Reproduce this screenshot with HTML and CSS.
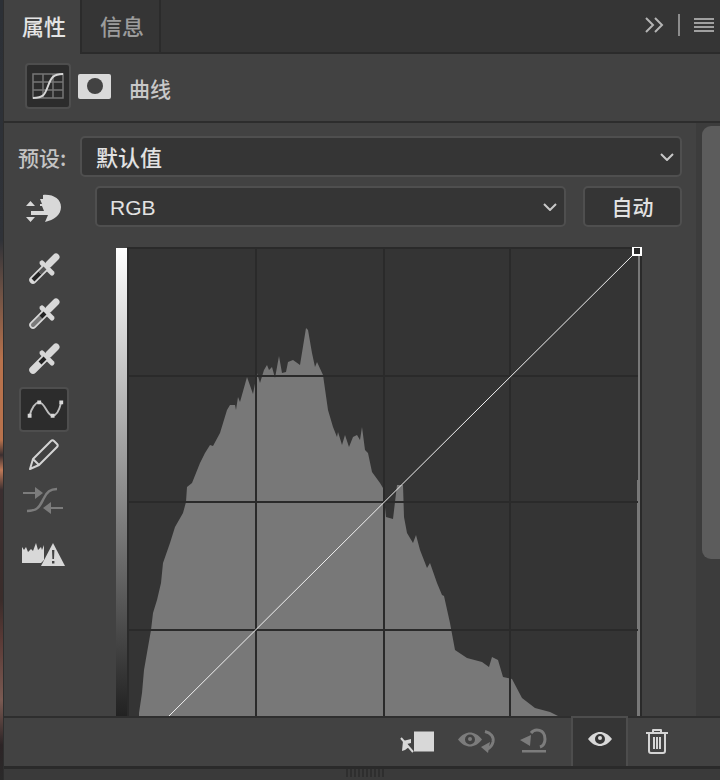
FILE: index.html
```html
<!DOCTYPE html>
<html lang="zh-CN">
<head>
  <meta charset="UTF-8">
  <title>属性 - 曲线</title>
  <link rel="stylesheet" href="styles.css">
</head>
<body>
  <div class="desktop-edge"></div>
  <div class="panel">
    <div class="tabs">
      <div class="tab tab-active">属性</div>
      <div class="tab">信息</div>
      <div class="tab-menu">
        <svg class="collapse" viewBox="0 0 20 16"><path d="M2 1l7 7-7 7M11 1l7 7-7 7"/></svg>
        <span class="tab-sep"></span>
        <span class="burger"><i></i><i></i><i></i><i></i></span>
      </div>
    </div>

    <div class="head">
      <div class="head-btn">
        <svg viewBox="0 0 32 26" width="32" height="26">
          <path class="grid-lines" d="M1 1h30v24H1zM1 9h30M1 17h30M11 1v24M21 1v24"/>
          <path class="s-curve" d="M1 25c11 0 12-4 15-12s5-12 15-12"/>
        </svg>
      </div>
      <div class="mask-icon"><span></span></div>
      <div class="head-title">曲线</div>
    </div>

    <div class="body">
      <div class="main">
        <div class="row preset-row">
          <label>预设:</label>
          <div class="select select-preset">
            <span>默认值</span>
            <svg class="chevron" viewBox="0 0 14 8"><path d="M1 1l6 6 6-6"/></svg>
          </div>
        </div>
        <div class="row channel-row">
          <svg class="hand" viewBox="0 0 36 32" width="36" height="32">
            <path class="light" d="M0 15l4.500-5 4.500 5zM0 26h9l-4.500 5z"/>
            <path class="light" d="M17 4C27 3 35 8 35 16c0 8-7 13-16 15l3-7H5v-4h13l-2-5h-2v-2h2l-2-5h3z"/>
          </svg>
          <div class="select select-channel">
            <span>RGB</span>
            <svg class="chevron" viewBox="0 0 14 8"><path d="M1 1l6 6 6-6"/></svg>
          </div>
          <div class="auto-btn">自动</div>
        </div>

        <div class="work">
          <div class="tools">
            <div class="tool">
              <svg viewBox="0 0 36 36" width="36" height="36">
                <path class="dropper-cap" d="M23 13l7-7"/>
                <path class="dropper-collar" d="M16 12l10 10"/>
                <path class="dropper-tube" d="M7 29l12-12"/>
                <path class="dropper-fill fill-black" d="M7 29l7-7"/>
                <path class="dropper-fill fill-dark" d="M14 22l5-5"/>
              </svg>
            </div>
            <div class="tool">
              <svg viewBox="0 0 36 36" width="36" height="36">
                <path class="dropper-cap" d="M23 13l7-7"/>
                <path class="dropper-collar" d="M16 12l10 10"/>
                <path class="dropper-tube" d="M7 29l12-12"/>
                <path class="dropper-fill fill-gray" d="M7 29l8-8"/>
                <path class="dropper-fill fill-black" d="M15 21l4-4"/>
              </svg>
            </div>
            <div class="tool">
              <svg viewBox="0 0 36 36" width="36" height="36">
                <path class="dropper-cap" d="M23 13l7-7"/>
                <path class="dropper-collar" d="M16 12l10 10"/>
                <path class="dropper-tube" d="M7 29l12-12"/>
                <path class="dropper-fill fill-black" d="M14 22l5-5"/>
              </svg>
            </div>
            <div class="tool tool-active">
              <svg viewBox="0 0 48 44" width="48" height="44">
                <path class="curve-line" d="M9 28c2-8 6-14 10-14 6 0 8 14 14 14 4 0 7-6 9-14"/>
                <path class="light" d="M7 26h4v4H7zM17 12h4v4h-4zM31 26h4v4h-4zM40 12h4v4h-4z"/>
              </svg>
            </div>
            <div class="tool">
              <svg viewBox="0 0 36 36" width="36" height="36">
                <path class="outline" d="M4 32l3-10L25 4c1-1 2-1 3 0l3 3c1 1 1 2 0 3L13 28zM7 22l6 6"/>
              </svg>
            </div>
            <div class="tool">
              <svg viewBox="0 0 44 32" width="44" height="32">
                <path class="smooth-line" d="M5 27c12 0 13-6 17-13 3-6 6-9 13-9"/>
                <path class="smooth-fill" d="M1 8h12V3l8 6-8 6v-5H1zM41 25H29v5l-8-6 8-6v5h12z"/>
              </svg>
            </div>
            <div class="tool tool-warn">
              <svg viewBox="0 0 44 26" width="44" height="26">
                <path class="light" d="M0 5l2 3 2-3 2 5 3-3 2 2 3-8 2 7 3-3 1 3 2-5v15l-3 3H0z"/>
                <path class="light" d="M31 1l12 23H19z"/>
                <path class="warn-mark" d="M30 8h2.400l-.4 9h-1.600zM30 19h2.400v2.400H30z"/>
              </svg>
            </div>
          </div>

          <div class="ramp"></div>

          <svg class="graph" viewBox="127 247 515 469" width="515" height="469">
            <rect class="graph-bg" x="127" y="247" width="515" height="469"/>
            <path class="hist" d="M139 716L139 713L142 693L144 670L148 647L151 630L153 613L157 600L161 583L163 563L170 543L175 527L183 513L186 502L187 487L192 483L200 463L205 453L210 445L213 446L220 433L227 410L230 405L235 405L236 410L238 397L240 402L247 377L253 394L257 373L260 383L264 370L267 365L269 370L272 367L275 378L279 356L282 373L286 372L288 362L293 360L300 365L306 328L308 330L312 353L315 367L317 362L323 375L328 410L333 427L337 437L338 432L342 445L345 435L349 447L353 437L357 435L360 440L362 427L365 450L368 453L372 472L380 483L383 488L386 517L393 519L397 485L403 485L404 517L407 533L413 543L416 535L420 550L427 568L430 563L437 583L442 595L444 596L450 623L455 650L467 658L482 662L489 667L492 657L498 660L503 677L512 679L522 698L535 708L550 712L558 716Z"/>
            <path class="hist" d="M638 247h2v469h-3V480h1z"/>
            <path class="grid" d="M127 376H638M127 502H638M127 630H638M256 247V716M384 247V716M510 247V716M127 248H642M128 247V716M641 247V716"/>
            <path class="diag" d="M169 716L637 251"/>
            <rect class="handle" x="633" y="247" width="8" height="8"/>
          </svg>
        </div>
      </div>

      <div class="scrollbar"><div class="thumb"></div></div>
    </div>

    <div class="footer">
      <svg class="foot-icon" viewBox="0 0 38 26" width="38" height="26">
        <path class="light" d="M18 3.500h20v20H18z"/>
        <path class="clip-line" d="M5 10l12 14"/>
        <path class="light" d="M6 23l1-10 8-2v4l-4 1 2 3-4 3z"/>
      </svg>
      <svg class="foot-icon" viewBox="0 0 38 26" width="38" height="26">
        <path class="eye" fill-rule="evenodd" d="M0 11.500C4 6.500 8 4.500 12 4.500s8 2 12 7c-4 5-8 7-12 7s-8-2-12-7zm12-5a5 5 0 100 10 5 5 0 000-10z"/>
        <circle class="eye" cx="12" cy="11" r="2"/>
        <path class="dim-line" d="M27 3.500c6 1.500 9 5.500 8 10.500-1 4-3 6-6 7"/>
        <path class="eye" d="M23 19l9-5-2 11z"/>
      </svg>
      <svg class="foot-icon" viewBox="0 0 28 28" width="28" height="28">
        <path class="dim-line" d="M11 6c4-5 14-4 14 6 0 4-2 7-5 8"/>
        <path class="eye" d="M0 13l11-5-1 11zM2 23h24v2.400H2z"/>
      </svg>
      <div class="foot-active">
        <svg viewBox="0 0 26 18" width="26" height="18">
          <path class="light" fill-rule="evenodd" d="M1 9C5 4 9 2 13 2s8 2 12 7c-4 5-8 7-12 7S5 14 1 9zm12-5a5 5 0 100 10 5 5 0 000-10z"/>
          <circle class="light" cx="13" cy="8" r="2"/>
        </svg>
      </div>
      <svg class="foot-trash" viewBox="0 0 24 26" width="24" height="26">
        <path class="outline" d="M1 5h22M8 5V2h8v3M4 5v18c0 1 1 2 2 2h12c1 0 2-1 2-2V5M9 9v12M12 9v12M15 9v12"/>
      </svg>
    </div>

    <div class="grip-bar">
      <div class="grip"></div>
    </div>
  </div>
</body>
</html>
```

FILE: styles.css
```css
* { box-sizing: border-box; }

body {
  margin: 0;
  width: 720px;
  height: 780px;
  overflow: hidden;
  display: flex;
  background: #424242;
  font-family: "Noto Sans CJK SC", "Liberation Sans", sans-serif;
  font-weight: 500;
}

.desktop-edge {
  width: 4px;
  flex: none;
  border-right: 1px solid #2e2e2e;
  background: linear-gradient(#2c3036 0, #2f3238 240px, #6b5044 290px, #b8724c 360px, #b8724c 440px, #3a2e30 455px, #c07a58 470px, #3a2e30 490px, #3a2c2a 600px, #5a3a36 640px, #7a5a52 700px, #2c2426 745px, #2a2a2a 780px);
}

.panel {
  flex: 1;
  display: flex;
  flex-direction: column;
  height: 780px;
}

/* tabs */
.tabs {
  height: 54px;
  display: flex;
  background: #353535;
  border-bottom: 2px solid #2b2b2b;
  flex: none;
}

.tab {
  width: 79px;
  font-size: 22px;
  line-height: 50px;
  padding-left: 18px;
  color: #9c9c9c;
  border-right: 2px solid #2b2b2b;
}

.tab-active {
  width: 78px;
  height: 54px;
  color: #e4e4e4;
  background: #424242;
  border-right: 2px solid #2b2b2b;
}

.tab-menu {
  margin-left: auto;
  display: flex;
  align-items: center;
  padding: 0 6px 2px 0;
}

.collapse {
  width: 20px;
  height: 16px;
  fill: none;
  stroke: #b4b4b4;
  stroke-width: 2;
}

.tab-sep {
  width: 2px;
  height: 22px;
  margin: 0 14px;
  background: #8c8c8c;
}

.burger {
  width: 20px;
  display: flex;
  flex-direction: column;
  gap: 2px;
}

.burger i {
  height: 2px;
  background: #a0a0a0;
}

/* header with curve icon */
.head {
  height: 69px;
  flex: none;
  display: flex;
  align-items: center;
  padding: 0 0 3px 21px;
  background: #424242;
  border-bottom: 2px solid #2d2d2d;
}

.head-btn {
  width: 46px;
  height: 46px;
  display: flex;
  align-items: center;
  justify-content: center;
  background: #2c2c2c;
  border: 2px solid #4e4e4e;
  border-radius: 4px;
}

.grid-lines {
  fill: none;
  stroke: #757575;
  stroke-width: 1.5;
}

.s-curve {
  fill: none;
  stroke: #d6d6d6;
  stroke-width: 2;
}

.mask-icon {
  width: 33px;
  height: 25px;
  margin-left: 7px;
  display: flex;
  align-items: center;
  justify-content: center;
  background: #d9d9d9;
  border-radius: 2px;
}

.mask-icon span {
  width: 16px;
  height: 16px;
  border-radius: 50%;
  background: #424242;
}

.head-title {
  margin: 3px 0 0 18px;
  font-size: 21px;
  color: #c8c8c8;
}

/* body */
.body {
  flex: none;
  display: flex;
  height: 593px;
  overflow: hidden;
}

.main {
  width: 692px;
  padding-right: 14px;
}

.row {
  display: flex;
  align-items: center;
}

.preset-row {
  height: 41px;
  margin-top: 13px;
  padding-left: 14px;
}

.preset-row label {
  width: 62px;
  font-size: 21px;
  color: #c4c4c4;
}

.select {
  height: 41px;
  display: flex;
  align-items: center;
  justify-content: space-between;
  background: #353535;
  border: 2px solid #4f4f4f;
  border-radius: 5px;
  font-size: 22px;
  color: #e2e2e2;
}

.select-preset {
  width: 602px;
  padding: 0 6px 0 14px;
}

.select-preset span {
  margin-top: -2px;
}

.select-channel {
  width: 471px;
  padding: 0 7px 0 13px;
  font-family: "Liberation Sans", sans-serif;
  font-size: 21px;
}

.select-channel span {
  margin-top: 2px;
}

.chevron {
  width: 14px;
  height: 8px;
  fill: none;
  stroke: #c8c8c8;
  stroke-width: 2;
}

.channel-row {
  height: 41px;
  margin-top: 9px;
  padding-left: 22px;
}

.hand {
  flex: none;
  margin-top: 1px;
}

.channel-row .select-channel {
  margin-left: 33px;
}

.auto-btn {
  width: 99px;
  height: 41px;
  margin-left: 17px;
  background: #353535;
  border: 2px solid #4f4f4f;
  border-radius: 5px;
  text-align: center;
  line-height: 37px;
  font-size: 21px;
  color: #e2e2e2;
}

.light { fill: #d8d8d8; }

.work {
  display: flex;
  margin-top: 20px;
  height: 469px;
}

.tools {
  width: 112px;
  flex: none;
  margin-top: -1px;
  padding-left: 15px;
}

.tool {
  width: 50px;
  height: 45px;
  display: flex;
  align-items: center;
  justify-content: center;
  border: 2px solid transparent;
}

.tool-active {
  margin-top: 6px;
  background: #2c2c2c;
  border-color: #4e4e4e;
  border-radius: 4px;
}

.tool-warn {
  margin-top: 10px;
}

.dropper-cap, .dropper-collar, .dropper-tube, .dropper-fill {
  fill: none;
  stroke-linecap: round;
}

.dropper-cap { stroke: #d8d8d8; stroke-width: 7; }
.dropper-collar { stroke: #d8d8d8; stroke-width: 5; stroke-linecap: round; }
.dropper-tube { stroke: #d8d8d8; stroke-width: 7.5; }
.dropper-fill { stroke-width: 4; }
.fill-black { stroke: #222; stroke-linecap: butt; }
.fill-dark { stroke: #555; stroke-linecap: butt; }
.fill-gray { stroke: #7a7a7a; }

.curve-line {
  fill: none;
  stroke: #bcbcbc;
  stroke-width: 2;
}

.outline {
  fill: none;
  stroke: #d4d4d4;
  stroke-width: 2;
  stroke-linejoin: round;
}

.smooth-line {
  fill: none;
  stroke: #7c7c7c;
  stroke-width: 2.5;
}

.smooth-fill { fill: #7c7c7c; }
.warn-mark { fill: #424242; }

.ramp {
  width: 11px;
  height: 468px;
  margin-top: 1px;
  flex: none;
  background: linear-gradient(#fff, #2a2a2a 96%, #222);
}

.graph {
  display: block;
  flex: none;
}

.graph-bg { fill: #343434; }
.hist { fill: #787878; }

.grid {
  fill: none;
  stroke: #2a2a2a;
  stroke-width: 2;
}

.diag {
  stroke: #f0f0f0;
  stroke-width: 1;
}

.handle {
  fill: #2a2a2a;
  stroke: #fff;
  stroke-width: 2;
}

/* scrollbar */
.scrollbar {
  width: 24px;
  flex: none;
  padding: 3px 0 0 6px;
  background: #3c3c3c;
  overflow: hidden;
}

.thumb {
  width: 30px;
  height: 433px;
  border-radius: 9px;
  background: #5c5c5c;
}

/* footer */
.footer {
  height: 50px;
  flex: none;
  display: flex;
  align-items: center;
  padding: 0 0 3px 392px;
  background: #424242;
  border-top: 2px solid #2e2e2e;
}

.foot-icon { margin-right: 24px; }
.eye { fill: #7c7c7c; }

.clip-line {
  fill: none;
  stroke: #d8d8d8;
  stroke-width: 2;
}

.dim-line {
  fill: none;
  stroke: #7c7c7c;
  stroke-width: 3;
}

.foot-active {
  width: 57px;
  height: 50px;
  align-self: flex-start;
  margin: -2px 0 0 -1px;
  display: flex;
  align-items: center;
  justify-content: center;
  padding-bottom: 6px;
  background: #353535;
  border: 2px solid #4d4d4d;
  border-bottom: 0;
}

.foot-trash { margin-left: 17px; }

.grip-bar {
  flex: 1;
  display: flex;
  justify-content: flex-start;
  padding-left: 342px;
  background: #3a3a3a;
  border-top: 3px solid #2a2a2a;
}

.grip {
  width: 38px;
  height: 8px;
  background: repeating-linear-gradient(90deg, #2e2e2e 0 2px, #3a3a3a 2px 4px);
}
```
